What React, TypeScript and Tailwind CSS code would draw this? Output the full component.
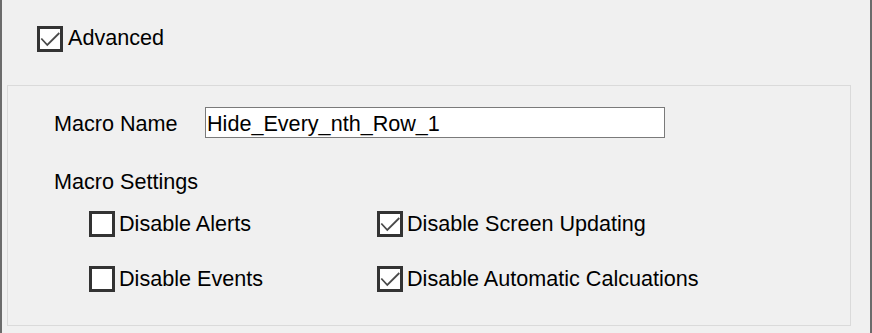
import type { ReactNode } from "react";

const FONT = { fontFamily: '"Liberation Sans", Arial, sans-serif' };

function Tick() {
  return (
    <svg width="20" height="20" viewBox="0 0 20 20" className="block">
      <path d="M1.3 9.5 L7.3 16 L19.3 4" fill="none" stroke="#4a4a4a" strokeWidth="1.8" />
    </svg>
  );
}

/** Classic Win32 check box: square frame, thin grey tick when checked. */
function CheckBox({ checked, children }: { checked?: boolean; children: ReactNode }) {
  return (
    <div className="flex items-start">
      <div className="h-[26px] w-[26px] shrink-0 border-[3px] border-[#333333] bg-white">
        {checked && <Tick />}
      </div>
      <span className="ml-[4px] mt-[1px] text-[21.6px] leading-[24px] text-black">{children}</span>
    </div>
  );
}

export default function App() {
  return (
    <div
      className="flex h-[333px] w-[872px] flex-col border-l-2 border-r-2 border-[#6b6b6b] bg-[#f0f0f0]"
      style={FONT}
    >
      {/* Advanced toggle */}
      <div className="pl-[35px] pt-[26px]">
        <div className="flex items-start">
          <div className="h-[26px] w-[26px] shrink-0 border-[3px] border-[#333333] bg-white">
            <Tick />
          </div>
          <span className="ml-[5px] text-[21.6px] leading-[24px] text-black">Advanced</span>
        </div>
      </div>

      {/* Advanced panel */}
      <div className="ml-[5px] mt-[33px] h-[241px] w-[844px] border border-[#dadada] pl-[46px] pt-[21px]">
        <div className="flex items-center">
          <span className="mt-[2px] w-[151px] text-[21.6px] leading-[24px] text-black">Macro Name</span>
          <div className="flex h-[31px] w-[460px] items-center border border-[#7a7a7a] bg-white pl-[1px] pt-[2px] text-[21.6px] leading-[24px] text-black">
            Hide_Every_nth_Row_1
          </div>
        </div>

        <div className="mt-[32px] text-[21.6px] leading-[24px] text-black">Macro Settings</div>

        <div className="ml-[35px] mt-[17px] grid grid-cols-[288px_1fr] gap-y-[29px]">
          <CheckBox>Disable Alerts</CheckBox>
          <CheckBox checked>Disable Screen Updating</CheckBox>
          <CheckBox>Disable Events</CheckBox>
          <CheckBox checked>Disable Automatic Calcuations</CheckBox>
        </div>
      </div>
    </div>
  );
}
